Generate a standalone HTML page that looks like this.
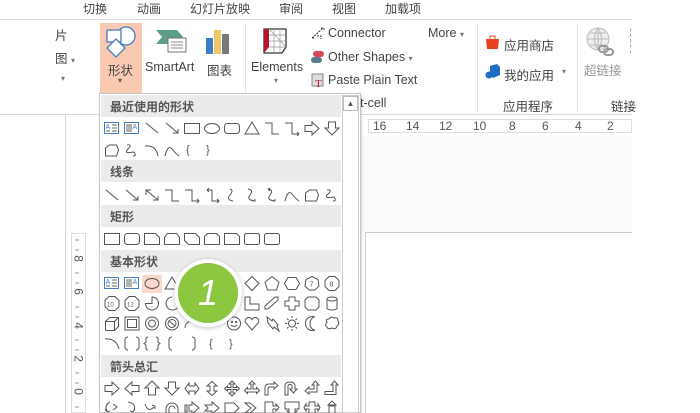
<!DOCTYPE html>
<html><head><meta charset="utf-8"><style>
*{margin:0;padding:0;box-sizing:border-box}
body{width:700px;height:413px;overflow:hidden;background:#fff;position:relative;font-family:"Liberation Sans","Noto Sans CJK SC",sans-serif;color:#444}
.a{position:absolute;white-space:nowrap}
.tab{font-size:12px;color:#444;top:0}
.rb{font-size:12.5px;color:#444}
.hd{position:absolute;left:101px;width:240px;height:22px;background:#ebebeb;font-size:12px;color:#555;padding:3px 0 0 9px;font-weight:bold}
</style></head><body>
<!-- tabs -->
<div class="a tab" style="left:83px">切换</div>
<div class="a tab" style="left:137px">动画</div>
<div class="a tab" style="left:190px">幻灯片放映</div>
<div class="a tab" style="left:279px">审阅</div>
<div class="a tab" style="left:332px">视图</div>
<div class="a tab" style="left:385px">加载项</div>
<div class="a" style="left:0;top:19px;width:632px;height:1px;background:#dcdcdc"></div>
<!-- ribbon -->
<div class="a rb" style="left:55px;top:25px">片</div>
<div class="a rb" style="left:55px;top:48px">图 <span style="font-size:8px;color:#777">▾</span></div>
<div class="a" style="left:61px;top:74px;font-size:8px;color:#777">▾</div>
<div class="a" style="left:100px;top:23px;width:42px;height:70px;background:#f9c9b2"></div>
<svg class="a" style="left:104px;top:25px" width="36" height="34"><circle cx="22" cy="11" r="9" fill="#fff" stroke="#4a7bbf" stroke-width="1.3"/><rect x="3" y="5" width="14" height="12" fill="#fff" stroke="#4a7bbf" stroke-width="1.3"/><path d="M12 14 L21 23 L12 32 L3 23Z" fill="#fff" stroke="#4a7bbf" stroke-width="1.3"/></svg>
<div class="a rb" style="left:108px;top:60px">形状</div>
<div class="a" style="left:118px;top:76px;font-size:8px;color:#555">▾</div>
<svg class="a" style="left:155px;top:28px" width="36" height="28"><path d="M1 2H22L28 9L22 16H1L7 9Z" fill="#5b9e8a"/><rect x="13" y="10" width="18" height="14" fill="#fff" stroke="#777"/><path d="M16 14h12M16 17h12M16 20h12" stroke="#888"/></svg>
<div class="a rb" style="left:145px;top:60px">SmartArt</div>
<svg class="a" style="left:206px;top:28px" width="26" height="28"><rect x="0" y="10" width="7" height="16" fill="#3f7ec0"/><rect x="8" y="2" width="7" height="24" fill="#f0c66a"/><rect x="16" y="6" width="7" height="20" fill="#777"/></svg>
<div class="a rb" style="left:207px;top:60px">图表</div>
<div class="a" style="left:245px;top:24px;width:1px;height:88px;background:#e2e2e2"></div>
<svg class="a" style="left:262px;top:27px" width="30" height="30"><path d="M2 2H24V20L20 26H2Z" fill="#fff" stroke="#333" stroke-width="1.3"/><path d="M2 2H7V20L2 26Z" fill="#b5182b"/><path d="M7 8H24M7 14H24M7 20H24M12 2V26M18 2V26M7 2L24 20" stroke="#999" stroke-width=".7"/></svg>
<div class="a rb" style="left:251px;top:60px">Elements</div>
<div class="a" style="left:274px;top:76px;font-size:8px;color:#777">▾</div>
<svg class="a" style="left:311px;top:26px" width="14" height="14"><path d="M1 12L12 2M1 12h2M10 2h3v3M6 10h4v3" stroke="#333" stroke-dasharray="2 1" fill="none"/></svg>
<div class="a rb" style="left:328px;top:26px">Connector</div>
<svg class="a" style="left:311px;top:50px" width="14" height="14"><rect x="2" y="1" width="11" height="6" rx="3" fill="#d9485a"/><rect x="0" y="7" width="11" height="6" rx="3" fill="#5c7b8f"/></svg>
<div class="a rb" style="left:328px;top:50px">Other Shapes <span style="font-size:8px;color:#777">▾</span></div>
<svg class="a" style="left:311px;top:72px" width="14" height="16"><rect x="1" y="2" width="11" height="12" fill="#ddd" stroke="#888"/><text x="4" y="15" font-size="11" fill="#c8173a" font-family="Liberation Serif">T</text></svg>
<div class="a rb" style="left:328px;top:73px">Paste Plain Text</div>
<div class="a rb" style="left:428px;top:26px">More <span style="font-size:8px;color:#777">▾</span></div>
<div class="a rb" style="left:360px;top:96px">t-cell</div>
<div class="a" style="left:477px;top:24px;width:1px;height:88px;background:#e2e2e2"></div>
<svg class="a" style="left:485px;top:34px" width="16" height="16"><path d="M1 5H14L13 15H2Z" fill="#e8431e"/><path d="M5 5V2H10V5" stroke="#e8431e" fill="none"/></svg>
<div class="a rb" style="left:504px;top:35px">应用商店</div>
<svg class="a" style="left:485px;top:64px" width="16" height="16"><path d="M5 2L12 0L15 3V11L8 14L5 11Z" fill="#1e6fc2"/><circle cx="4" cy="11" r="3.5" fill="#1e6fc2"/></svg>
<div class="a rb" style="left:504px;top:65px">我的应用</div>
<div class="a" style="left:562px;top:67px;font-size:8px;color:#777">▾</div>
<div class="a rb" style="left:503px;top:96px">应用程序</div>
<div class="a" style="left:577px;top:24px;width:1px;height:88px;background:#e2e2e2"></div>
<svg class="a" style="left:586px;top:27px" width="30" height="30"><circle cx="12" cy="12" r="11" fill="#eee" stroke="#bbb"/><path d="M1 12H23M12 1V23M4 6H20M4 18H20M12 1Q5 12 12 23M12 1Q19 12 12 23" stroke="#bbb" fill="none"/><rect x="13" y="19" width="9" height="6" rx="3" fill="none" stroke="#999" stroke-width="2"/><rect x="18" y="22" width="9" height="6" rx="3" fill="none" stroke="#999" stroke-width="2"/></svg>
<div class="a rb" style="left:584px;top:60px;color:#999">超链接</div>
<div class="a rb" style="left:611px;top:96px">链接</div>
<div class="a" style="left:630px;top:28px;width:1px;height:25px;border-left:1px dashed #aaa"></div>
<div class="a" style="left:0;top:114px;width:632px;height:1px;background:#d8d8d8"></div>
<div class="a" style="left:65px;top:115px;width:1px;height:298px;background:#d8d8d8"></div>
<!-- canvas -->
<div class="a" style="left:360px;top:136px;width:272px;height:97px;background:#fbfbfb"></div>
<div class="a" style="left:368px;top:119px;width:264px;height:14px;border:1px solid #ddd;background:#fff;font-size:12px;color:#555;line-height:12px">
<span class="a" style="left:4px">16</span><span class="a" style="left:37px">14</span><span class="a" style="left:70px">12</span><span class="a" style="left:104px">10</span><span class="a" style="left:140px">8</span><span class="a" style="left:173px">6</span><span class="a" style="left:206px">4</span><span class="a" style="left:238px">2</span></div>
<div class="a" style="left:365px;top:232px;width:267px;height:181px;border-left:1px solid #ccc;border-top:1px solid #ccc;background:#fff"></div>
<div class="a" style="left:71px;top:233px;width:15px;height:180px;border:1px solid #ddd;background:#fff"></div>
<div class="a" style="left:73px;top:242px;font-size:12px;color:#555;line-height:33.3px;width:10px;text-align:center">
<div style="transform:rotate(90deg)">8</div><div style="transform:rotate(90deg)">6</div><div style="transform:rotate(90deg)">4</div><div style="transform:rotate(90deg)">2</div><div style="transform:rotate(90deg)">0</div></div>
<!-- dropdown -->
<div class="a" style="left:99px;top:93px;width:262px;height:320px;border:1px solid #c6c6c6;background:#fff;box-shadow:1px 1px 2px rgba(0,0,0,.15)"></div>
<div class="a" style="left:342px;top:95px;width:17px;height:318px;border:1px solid #ccc;background:#fff"></div>
<div class="a" style="left:343px;top:96px;width:15px;height:15px;border:1px solid #bbb;font-size:8px;text-align:center;line-height:13px;color:#555">▲</div>
<div class="hd" style="top:95px">最近使用的形状</div>
<div class="hd" style="top:160px">线条</div>
<div class="hd" style="top:205px">矩形</div>
<div class="hd" style="top:250px">基本形状</div>
<div class="hd" style="top:355px">箭头总汇</div>
<div class="a" style="left:142px;top:275px;width:20px;height:18px;background:#fbd9cc"></div>
<svg class="a" style="left:0;top:0" width="700" height="413" fill="none" stroke="#555" stroke-width="1">
<g transform="translate(104,121)">
<rect x=".5" y="1.5" width="14" height="11" stroke="#4a7bbf"/><path d="M8 4h5M8 7h5M8 10h5M2 10h4" stroke="#666"/><text x="1.5" y="8" font-size="7" fill="#4a7bbf" stroke="none">A</text>
<g transform="translate(20,0)"><rect x=".5" y="1.5" width="14" height="11" stroke="#4a7bbf"/><path d="M3 3v8M5 3v8M7 3v8" stroke="#666"/><text x="8.5" y="8" font-size="7" fill="#4a7bbf" stroke="none">A</text></g>
<path transform="translate(40,0)" d="M2 2L14 12"/>
<path transform="translate(60,0)" d="M2 2L14 12M9 12h5v-4"/>
<rect transform="translate(80,0)" x=".5" y="2.5" width="15" height="10"/>
<ellipse transform="translate(100,0)" cx="8" cy="7.5" rx="7.5" ry="5"/>
<rect transform="translate(120,0)" x=".5" y="2.5" width="15" height="10" rx="3"/>
<path transform="translate(140,0)" d="M8 1L15 13H1Z"/>
<path transform="translate(160,0)" d="M1 2h7v11h7"/>
<path transform="translate(180,0)" d="M1 2h7v11h7m-2-2l2 2-2 2"/>
<path transform="translate(200,0)" d="M1 4.5h7V1l7 6.5-7 6.5V10.5H1Z"/>
<path transform="translate(220,0)" d="M4.5 1h7v6h3.5l-7 7-7-7h3.5Z"/>
</g>
<g transform="translate(104,143)">
<path d="M1.5 13V5l4-3h7l2 5-2 6Z"/>
<path transform="translate(20,0)" d="M3 2Q9 1 4 6T10 9Q13 13 9 13"/>
<path transform="translate(40,0)" d="M1 3Q12 2 14 13"/>
<path transform="translate(60,0)" d="M1 13Q4 1 8 6T15 13"/>
<text x="82" y="10" font-size="11" fill="#555" stroke="none">{</text>
<text x="102" y="10" font-size="11" fill="#555" stroke="none">}</text>
</g>
<g transform="translate(104,188)">
<path d="M2 2L14 12"/>
<path transform="translate(20,0)" d="M2 2L14 12M9 12h5v-4"/>
<path transform="translate(40,0)" d="M2 2L14 12M9 12h5v-4M2 7V2h5"/>
<path transform="translate(60,0)" d="M1 2h7v11h7"/>
<path transform="translate(80,0)" d="M1 2h7v11h7m-2-2l2 2-2 2"/>
<path transform="translate(100,0)" d="M3 2h5v11h7m-2-2l2 2-2 2M3 2l2-2M3 2l2 2"/>
<path transform="translate(120,0)" d="M6 1Q10 2 6 7T9 13"/>
<path transform="translate(140,0)" d="M4 1Q10 2 6 7T11 13m-2 0h2v-2"/>
<path transform="translate(160,0)" d="M4 1Q10 2 6 7T11 13m-2 0h2v-2M4 1l2-1M4 1l2 2"/>
<path transform="translate(180,0)" d="M1 13Q4 1 8 6T15 13"/>
<path transform="translate(200,0)" d="M1.5 13V5l4-3h7l2 5-2 6Z"/>
<path transform="translate(220,0)" d="M3 2Q9 1 4 6T10 9Q13 13 9 13"/>
</g>
<g transform="translate(104,232)">
<rect x=".5" y="1.5" width="15" height="11"/>
<rect transform="translate(20,0)" x=".5" y="1.5" width="15" height="11" rx="3"/>
<path transform="translate(40,0)" d="M.5 1.5h11l4 4v7H.5Z"/>
<path transform="translate(60,0)" d="M3.5 1.5h9l3 4v7H.5v-7Z"/>
<path transform="translate(80,0)" d="M.5 1.5h11l4 4v7h-11l-4-4Z"/>
<path transform="translate(100,0)" d="M3.5 1.5h9l3 3v8H.5v-8Z"/>
<path transform="translate(120,0)" d="M.5 1.5h12l3 3v8H.5Z"/>
<rect transform="translate(140,0)" x=".5" y="1.5" width="15" height="11" rx="2"/>
<rect transform="translate(160,0)" x=".5" y="1.5" width="15" height="11" rx="2"/>
</g>
<g transform="translate(104,276)">
<rect x=".5" y="1.5" width="14" height="11" stroke="#4a7bbf"/><path d="M8 4h5M8 7h5M8 10h5M2 10h4" stroke="#666"/><text x="1.5" y="8" font-size="7" fill="#4a7bbf" stroke="none">A</text>
<g transform="translate(20,0)"><rect x=".5" y="1.5" width="14" height="11" stroke="#4a7bbf"/><path d="M3 3v8M5 3v8M7 3v8" stroke="#666"/><text x="8.5" y="8" font-size="7" fill="#4a7bbf" stroke="none">A</text></g>
<ellipse transform="translate(40,0)" cx="8" cy="7.5" rx="7" ry="5"/>
<path transform="translate(60,0)" d="M8 1L15 13H1Z"/>
<path transform="translate(140,0)" d="M8 .5L15 7.5 8 14.5 1 7.5Z"/>
<path transform="translate(160,0)" d="M8 .5L15 6 12.5 14H3.5L1 6Z"/>
<path transform="translate(180,0)" d="M4 1.5h8l3.5 6-3.5 6H4L.5 7.5Z"/>
<g transform="translate(200,0)"><path d="M8 .5L14 3.5 15 10 11 14H5L1 10 2 3.5Z"/><text x="5.5" y="10.5" font-size="7" fill="#555" stroke="none">7</text></g>
<g transform="translate(220,0)"><path d="M5 .5h6l4 4v6l-4 4H5l-4-4v-6Z"/><text x="5.5" y="10.5" font-size="7" fill="#555" stroke="none">8</text></g>
</g>
<g transform="translate(104,296)">
<path d="M5 .5h6l4 4v6l-4 4H5l-4-4v-6Z"/><text x="3" y="10.5" font-size="6" fill="#555" stroke="none">10</text>
<g transform="translate(20,0)"><path d="M5 .5h6l4 4v6l-4 4H5l-4-4v-6Z"/><text x="3" y="10.5" font-size="6" fill="#555" stroke="none">12</text></g>
<path transform="translate(40,0)" d="M8 7.5V1A6.5 6.5 0 1 1 1.5 7.5Z"/>
<path transform="translate(60,0)" d="M8 1A6.5 6.5 0 1 0 14 11"/>
<path transform="translate(140,0)" d="M1 1h5v7h9v6H1Z"/>
<path transform="translate(160,0)" d="M1 13V10L11 1H14V4L4 13Z"/>
<path transform="translate(180,0)" d="M5 1h6v4h4v5h-4v4H5v-4H1V5h4Z"/>
<path transform="translate(200,0)" d="M4 1h8l3 3v7l-3 3H4l-3-3V4Z"/>
<path transform="translate(220,0)" d="M3 3a5 2 0 0 1 10 0v9a5 2 0 0 1-10 0ZM3 3a5 2 0 0 0 10 0"/>
</g>
<g transform="translate(104,316)">
<path d="M1.5 5.5h9v9h-9ZM1.5 5.5l4-4h9v9l-4 4M10.5 5.5l4-4"/>
<g transform="translate(20,0)"><rect x="1" y="1" width="14" height="13"/><rect x="3.5" y="3.5" width="9" height="8"/></g>
<g transform="translate(40,0)"><circle cx="8" cy="7.5" r="6.5"/><circle cx="8" cy="7.5" r="3.5"/></g>
<g transform="translate(60,0)"><circle cx="8" cy="7.5" r="6.5"/><circle cx="8" cy="7.5" r="4"/><path d="M5 5l6 5"/></g>
<path transform="translate(80,0)" d="M1 12A7 7 0 0 1 8 5"/>
<g transform="translate(120,0)"><circle cx="10" cy="7.5" r="6.5"/><circle cx="8" cy="6" r=".6"/><circle cx="12" cy="6" r=".6"/><path d="M7 9Q10 12 13 9"/></g>
<path transform="translate(140,0)" d="M8 14L1.5 6.5A3.5 3.5 0 0 1 8 3.5A3.5 3.5 0 0 1 14.5 6.5Z"/>
<path transform="translate(160,0)" d="M3 1l5 4 1-2 5 6-1 1 2 5-5-4-1 2-5-6Z"/>
<g transform="translate(180,0)"><circle cx="8" cy="7.5" r="3.5"/><path d="M8 0v2M8 13v2M1 7.5h2M13 7.5h2M3 2.5l1.5 1.5M11.5 11l1.5 1.5M3 12.5l1.5-1.5M11.5 4l1.5-1.5"/></g>
<path transform="translate(200,0)" d="M11 1A7 7 0 1 0 11 14A5 6.5 0 0 1 11 1Z"/>
<path transform="translate(220,0)" d="M3 6Q1 3 5 3Q7 0 10 2Q14 1 14 5Q16 8 13 10Q12 14 8 12Q4 14 3 11Q0 9 3 6Z"/>
</g>
<g transform="translate(104,336)">
<path d="M1 3Q12 2 15 13"/>
<path transform="translate(20,0)" d="M4 1Q1 1 1 4v7q0 3 3 3M12 1q3 0 3 3v7q0 3-3 3"/>
<path transform="translate(40,0)" d="M4 1q-2 0-2 2v3l-2 1.5 2 1.5v3q0 2 2 2M12 1q2 0 2 2v3l2 1.5-2 1.5v3q0 2-2 2"/>
<path transform="translate(60,0)" d="M8 1Q5 1 5 4v7q0 3 3 3"/>
<path transform="translate(80,0)" d="M8 1q3 0 3 3v7q0 3-3 3"/>
<text x="105" y="11" font-size="11" fill="#555" stroke="none">{</text>
<text x="125" y="11" font-size="11" fill="#555" stroke="none">}</text>
</g>
<g transform="translate(104,381)">
<path d="M1 4.5h7V1l7 6.5-7 6.5V10.5H1Z"/>
<path transform="translate(20,0)" d="M15 4.5H8V1L1 7.5 8 14V10.5h7Z"/>
<path transform="translate(40,0)" d="M4.5 14V7H1l7-7 7 7h-3.5v7Z"/>
<path transform="translate(60,0)" d="M4.5 1h7v6h3.5l-7 7-7-7h3.5Z"/>
<path transform="translate(80,0)" d="M1 7.5L5 2v3h6V2l4 5.5-4 5.5v-3H5v3Z"/>
<path transform="translate(100,0)" d="M8 0.5L13 5h-3v5h3l-5 4.5L3 10h3V5H3Z"/>
<path transform="translate(120,0)" d="M8 0l3 3H9v3.5h3.5V5l3 2.5-3 2.5V8.5H9V12h2l-3 3-3-3h2V8.5H3.5V10L.5 7.5l3-2.5v1.5H7V3H5Z"/>
<path transform="translate(140,0)" d="M8 0l3 3H9v5h3.5V6.5l3 3-3 3V11h-9v1.5l-3-3 3-3V8H7V3H5Z"/>
<path transform="translate(160,0)" d="M1 14V7q0-4 4-4h5V1l4 3.5L10 8V6H6q-2 0-2 2v6Z"/>
<path transform="translate(180,0)" d="M1 14V5q0-4 5-4t5 4v3h2l-3.5 4L6 8h2V5q0-1.5-2-1.5T4 5v9Z"/>
<path transform="translate(200,0)" d="M1 10l4-4v2h5V4H8l3.5-4L15 4h-2v7H5v2Z"/>
<path transform="translate(220,0)" d="M1 10.5h8V4H7l3.5-4L14 4h-2v9.5H1Z"/>
</g>
<g transform="translate(104,401)">
<path d="M6 1Q0 4 3 10M1 8l2 3 3-1M9 3l4 3-4 3"/>
<path transform="translate(20,0)" d="M4 1Q14 3 9 11M11 8l-2 3-3-1"/>
<path transform="translate(40,0)" d="M1 3Q4 12 10 6M8 4l3 1 0 3"/>
<path transform="translate(60,0)" d="M2 12V8a6 6 0 0 1 12 0v4M5 12V8a3 3 0 0 1 6 0"/>
<path transform="translate(80,0)" d="M1 4h2v7H1ZM5 4h3V1l7 6-7 6v-3H5Z"/>
<path transform="translate(100,0)" d="M1 4h7V1l7 6-7 6V10H1l3-3Z"/>
<path transform="translate(120,0)" d="M1 2h9l5 5-5 5H1Z"/>
<path transform="translate(140,0)" d="M1 2h5l6 5-6 5H1l6-5Z"/>
<path transform="translate(160,0)" d="M1 1h8v4h3V3l3 3.5-3 3.5V8H9v5H1Z"/>
<path transform="translate(180,0)" d="M1 1h14v7h-4v2h2l-5 4-5-4h2V8H1Z"/>
<path transform="translate(200,0)" d="M5 1h6v4h3V3l2 3.5-2 3.5V8h-3v5H5V8H2v2L0 6.5 2 3v2h3Z"/>
<path transform="translate(220,0)" d="M5 5h6v9H5ZM8 0l4 4h-8Z"/>
</g>
<path d="M75 240h4M75 250h4M75 273h4M75 283h4M75 307h4M75 317h4M75 340h4M75 350h4M75 373h4M75 383h4M75 407h4" stroke="#999"/>
</svg>
<!-- green badge -->
<div class="a" style="left:174px;top:259px;width:68px;height:68px;border-radius:50%;background:#fff;box-shadow:0 1px 4px rgba(0,0,0,.25)"></div>
<div class="a" style="left:178px;top:263px;width:60px;height:60px;border-radius:50%;background:#8dc63f;color:#fff;font-size:36px;text-align:center;line-height:60px;font-style:italic;font-family:'Liberation Sans',sans-serif">1</div>
</body></html>
